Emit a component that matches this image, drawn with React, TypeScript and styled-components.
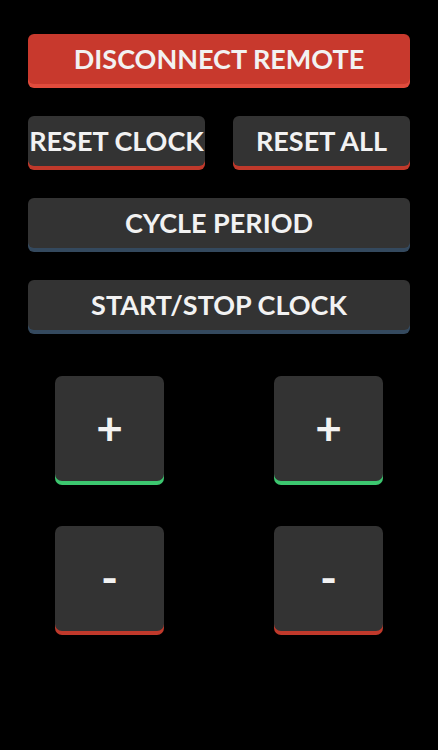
import React from 'react';
import styled, { createGlobalStyle } from 'styled-components';

const GlobalStyle = createGlobalStyle`
  html, body {
    margin: 0;
    padding: 0;
    background: #000;
  }
  body {
    font-family: Lato, "Open Sans", sans-serif;
  }
`;

const Page = styled.div`
  width: 438px;
  min-height: 750px;
  box-sizing: border-box;
  padding: 34px 28px 0;
  display: flex;
  flex-direction: column;
  gap: 32px;
`;

const Row = styled.div`
  display: grid;
  grid-template-columns: 1fr 1fr;
  gap: 28px;
`;

// bottom edge drawn as a shadow so it follows the rounded corners
const Button = styled.button<{ $bg?: string; $edge: string }>`
  height: 50px;
  width: 100%;
  border: none;
  border-radius: 6px;
  box-shadow: 0 4px 0 ${(p) => p.$edge};
  background: ${(p) => p.$bg || '#333333'};
  color: #f2f2f2;
  font-family: Lato, "Open Sans", sans-serif;
  font-weight: 700;
  font-size: 27px;
  padding: 0 0 2px;
  white-space: nowrap;
  overflow: visible;
  display: flex;
  align-items: center;
  justify-content: center;
`;

const Pad = styled.div`
  margin-top: 14px;
  padding: 0 27px;
  display: grid;
  grid-template-columns: 109px 109px;
  justify-content: space-between;
  row-gap: 45px;
`;

const Square = styled.button<{ $edge: string }>`
  width: 109px;
  height: 105px;
  border: none;
  border-radius: 7px;
  box-shadow: 0 4px 0 ${(p) => p.$edge};
  background: #333333;
  color: #f2f2f2;
  font-family: Lato, "Open Sans", sans-serif;
  font-weight: 700;
  font-size: 46px;
  padding: 0 0 2px;
  display: flex;
  align-items: center;
  justify-content: center;
`;

const RED = '#e04b3c';
const BLUE = '#34495e';
const GREEN = '#3cc76f';
const DARKRED = '#c0392b';

export default function App() {
  return (
    <>
      <GlobalStyle />
      <Page>
        <Button $bg="#c8392d" $edge={RED}>DISCONNECT REMOTE</Button>
        <Row>
          <Button $edge={DARKRED}>RESET CLOCK</Button>
          <Button $edge={DARKRED}>RESET ALL</Button>
        </Row>
        <Button $edge={BLUE}>CYCLE PERIOD</Button>
        <Button $edge={BLUE}>START/STOP CLOCK</Button>
        <Pad>
          <Square $edge={GREEN}>+</Square>
          <Square $edge={GREEN}>+</Square>
          <Square $edge={DARKRED}>-</Square>
          <Square $edge={DARKRED}>-</Square>
        </Pad>
      </Page>
    </>
  );
}
